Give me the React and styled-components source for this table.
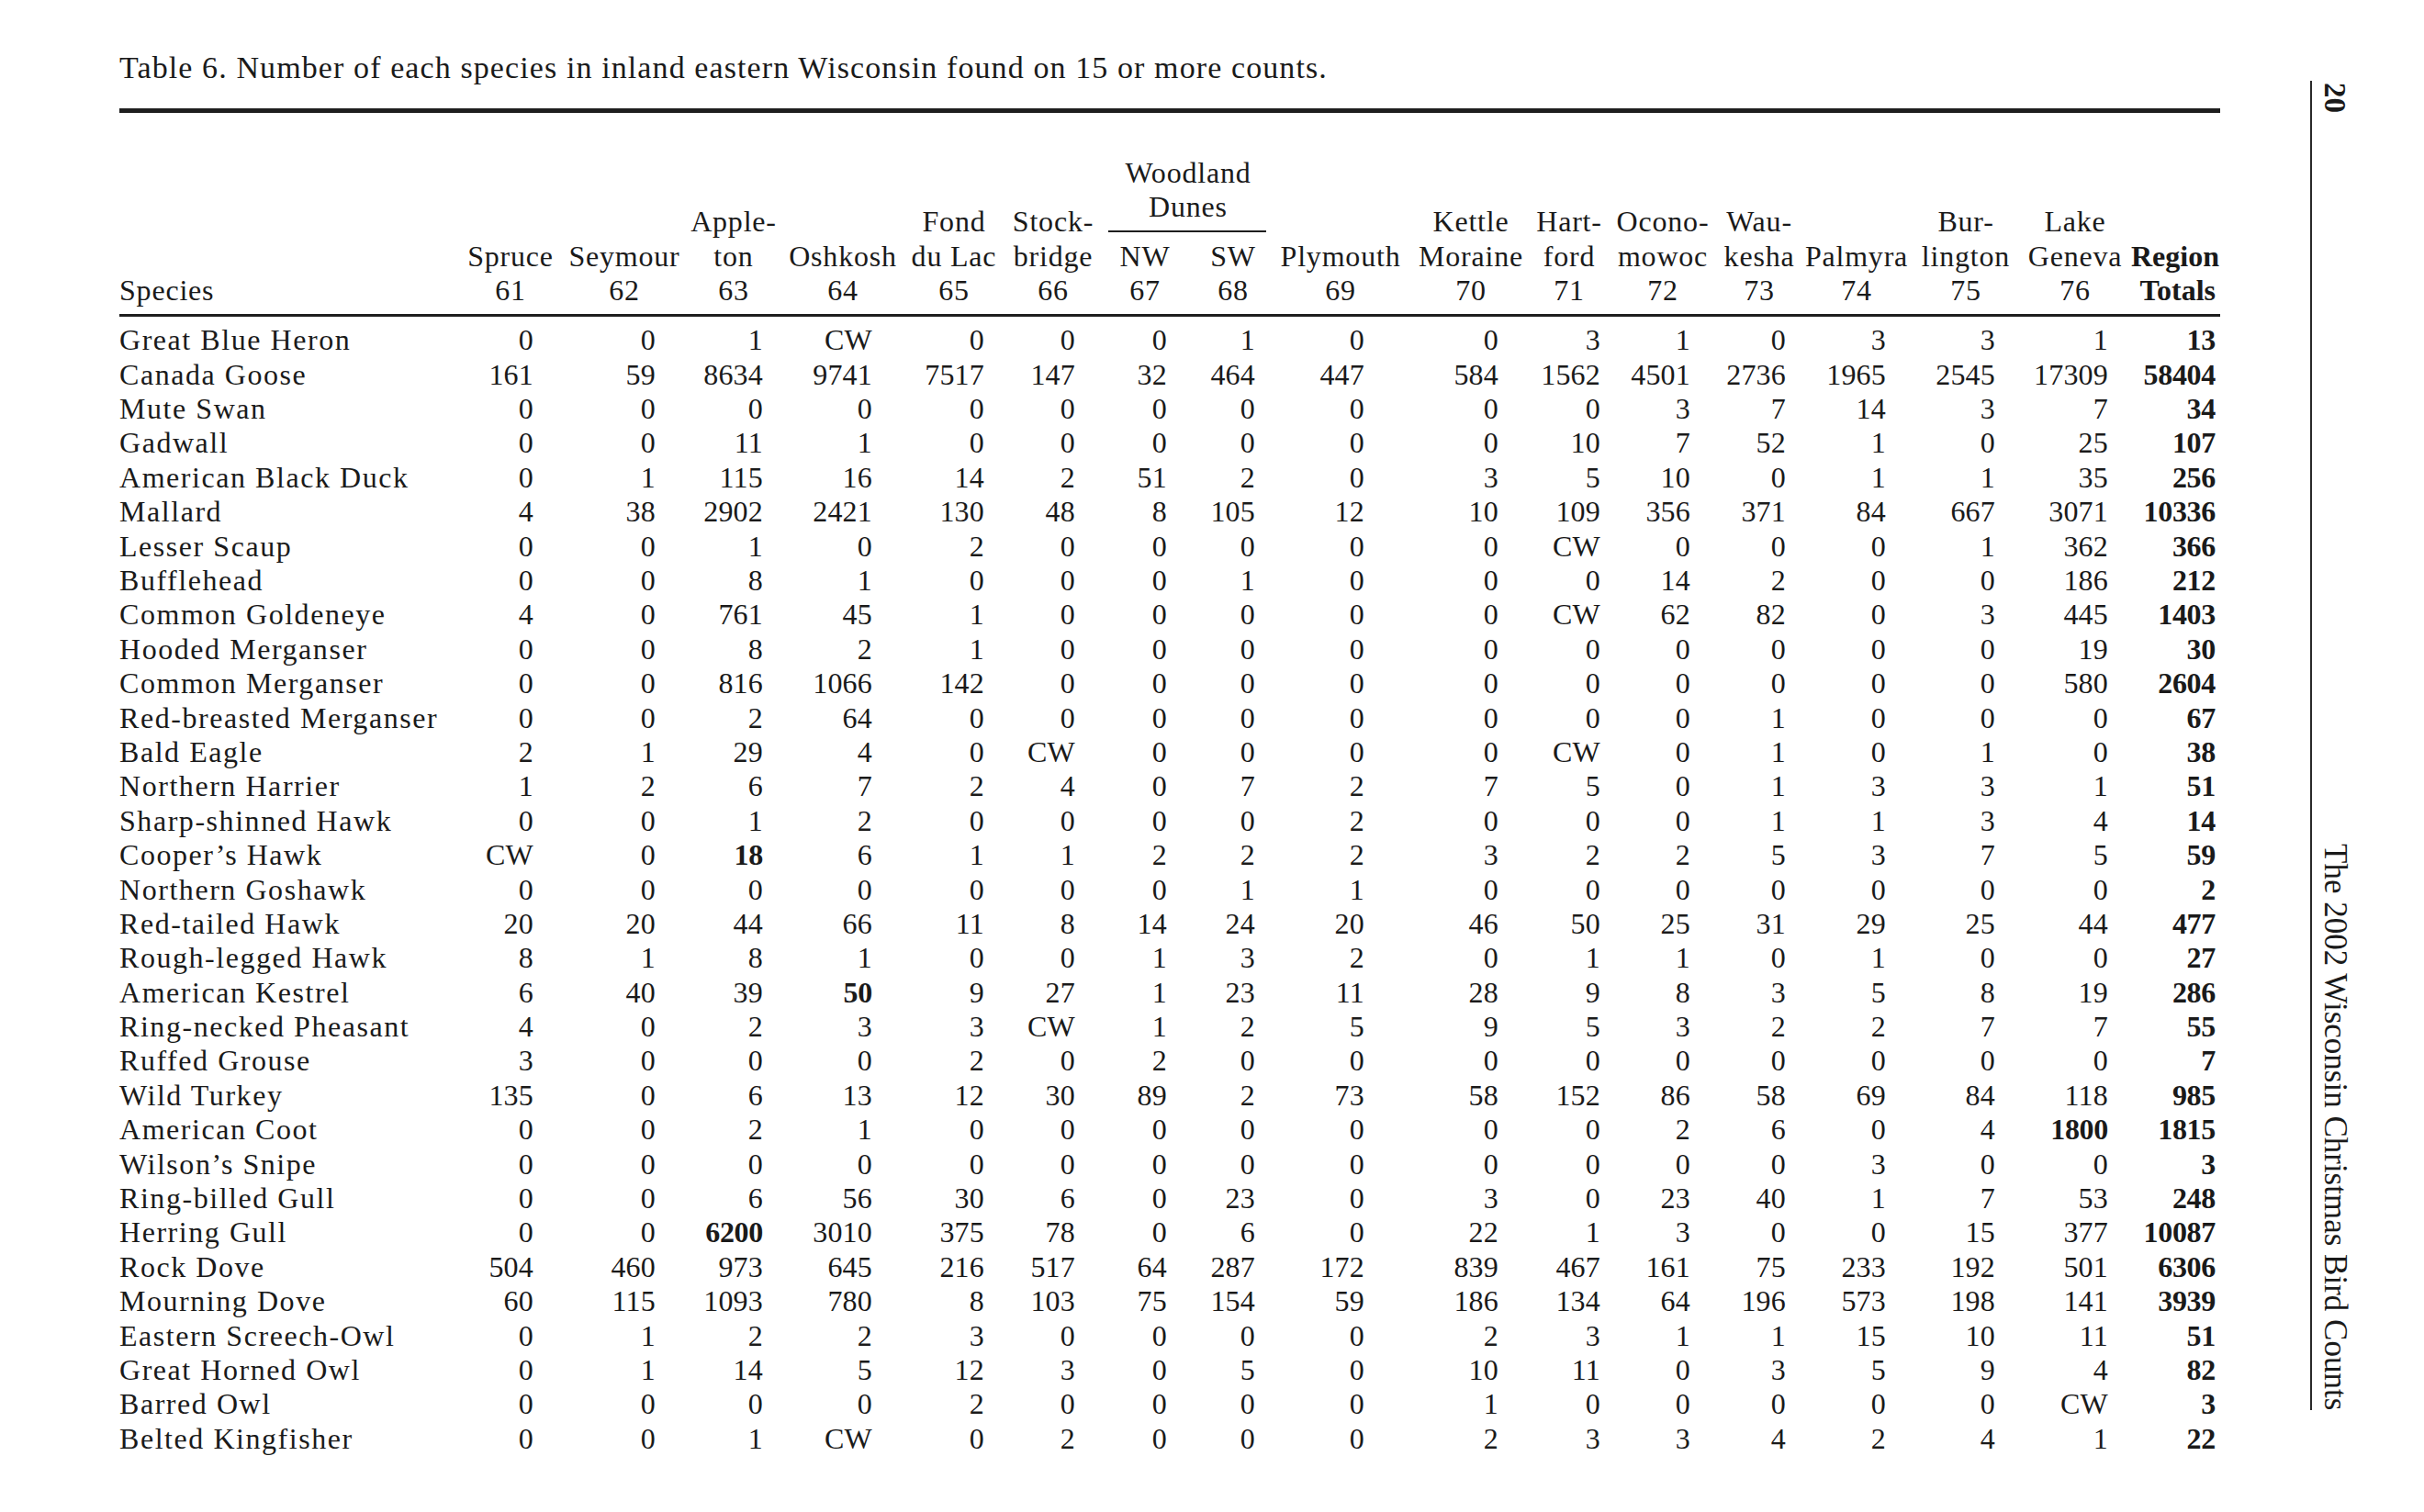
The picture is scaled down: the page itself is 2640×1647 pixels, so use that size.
import React from 'react';
import styled, { createGlobalStyle } from 'styled-components';

const GlobalStyle = createGlobalStyle`
  html, body { margin: 0; padding: 0; background: #ffffff; }
  body {
    font-family: "Liberation Serif", "Times New Roman", serif;
    color: #1a1a1a;
  }
`;

const COLS = [
  { w: 120, pad: 35 },
  { w: 128, pad: 30 },
  { w: 110, pad: 23 },
  { w: 128, pad: 32 },
  { w: 114, pad: 24 },
  { w: 102, pad: 27 },
  { w: 98, pad: 25 },
  { w: 94, pad: 23 },
  { w: 140, pad: 44 },
  { w: 144, pad: 42 },
  { w: 70, pad: 1 },
  { w: 134, pad: 37 },
  { w: 76, pad: 9 },
  { w: 136, pad: 36 },
  { w: 102, pad: 19 },
  { w: 136, pad: 32 },
  { w: 90, pad: 5 },
];

const TEMPLATE = `366px ${COLS.map((c) => `${c.w}px`).join(' ')}`;
const LINE = 37.4;

const HEAD_TOP = ['', '', 'Apple-', '', 'Fond', 'Stock-', null, null, '', 'Kettle', 'Hart-', 'Ocono-', 'Wau-', '', 'Bur-', 'Lake', ''];
const HEAD_MID = ['Spruce', 'Seymour', 'ton', 'Oshkosh', 'du Lac', 'bridge', 'NW', 'SW', 'Plymouth', 'Moraine', 'ford', 'mowoc', 'kesha', 'Palmyra', 'lington', 'Geneva', 'Region'];
const HEAD_NUM = ['61', '62', '63', '64', '65', '66', '67', '68', '69', '70', '71', '72', '73', '74', '75', '76', 'Totals'];

// "*" prefix marks a bold figure
const ROWS = [
  ['Great Blue Heron', '0 0 1 CW 0 0 0 1 0 0 3 1 0 3 3 1 13'],
  ['Canada Goose', '161 59 8634 9741 7517 147 32 464 447 584 1562 4501 2736 1965 2545 17309 58404'],
  ['Mute Swan', '0 0 0 0 0 0 0 0 0 0 0 3 7 14 3 7 34'],
  ['Gadwall', '0 0 11 1 0 0 0 0 0 0 10 7 52 1 0 25 107'],
  ['American Black Duck', '0 1 115 16 14 2 51 2 0 3 5 10 0 1 1 35 256'],
  ['Mallard', '4 38 2902 2421 130 48 8 105 12 10 109 356 371 84 667 3071 10336'],
  ['Lesser Scaup', '0 0 1 0 2 0 0 0 0 0 CW 0 0 0 1 362 366'],
  ['Bufflehead', '0 0 8 1 0 0 0 1 0 0 0 14 2 0 0 186 212'],
  ['Common Goldeneye', '4 0 761 45 1 0 0 0 0 0 CW 62 82 0 3 445 1403'],
  ['Hooded Merganser', '0 0 8 2 1 0 0 0 0 0 0 0 0 0 0 19 30'],
  ['Common Merganser', '0 0 816 1066 142 0 0 0 0 0 0 0 0 0 0 580 2604'],
  ['Red-breasted Merganser', '0 0 2 64 0 0 0 0 0 0 0 0 1 0 0 0 67'],
  ['Bald Eagle', '2 1 29 4 0 CW 0 0 0 0 CW 0 1 0 1 0 38'],
  ['Northern Harrier', '1 2 6 7 2 4 0 7 2 7 5 0 1 3 3 1 51'],
  ['Sharp-shinned Hawk', '0 0 1 2 0 0 0 0 2 0 0 0 1 1 3 4 14'],
  ['Cooper\u2019s Hawk', 'CW 0 *18 6 1 1 2 2 2 3 2 2 5 3 7 5 59'],
  ['Northern Goshawk', '0 0 0 0 0 0 0 1 1 0 0 0 0 0 0 0 2'],
  ['Red-tailed Hawk', '20 20 44 66 11 8 14 24 20 46 50 25 31 29 25 44 477'],
  ['Rough-legged Hawk', '8 1 8 1 0 0 1 3 2 0 1 1 0 1 0 0 27'],
  ['American Kestrel', '6 40 39 *50 9 27 1 23 11 28 9 8 3 5 8 19 286'],
  ['Ring-necked Pheasant', '4 0 2 3 3 CW 1 2 5 9 5 3 2 2 7 7 55'],
  ['Ruffed Grouse', '3 0 0 0 2 0 2 0 0 0 0 0 0 0 0 0 7'],
  ['Wild Turkey', '135 0 6 13 12 30 89 2 73 58 152 86 58 69 84 118 985'],
  ['American Coot', '0 0 2 1 0 0 0 0 0 0 0 2 6 0 4 *1800 1815'],
  ['Wilson\u2019s Snipe', '0 0 0 0 0 0 0 0 0 0 0 0 0 3 0 0 3'],
  ['Ring-billed Gull', '0 0 6 56 30 6 0 23 0 3 0 23 40 1 7 53 248'],
  ['Herring Gull', '0 0 *6200 3010 375 78 0 6 0 22 1 3 0 0 15 377 10087'],
  ['Rock Dove', '504 460 973 645 216 517 64 287 172 839 467 161 75 233 192 501 6306'],
  ['Mourning Dove', '60 115 1093 780 8 103 75 154 59 186 134 64 196 573 198 141 3939'],
  ['Eastern Screech-Owl', '0 1 2 2 3 0 0 0 0 2 3 1 1 15 10 11 51'],
  ['Great Horned Owl', '0 1 14 5 12 3 0 5 0 10 11 0 3 5 9 4 82'],
  ['Barred Owl', '0 0 0 0 2 0 0 0 0 1 0 0 0 0 0 CW 3'],
  ['Belted Kingfisher', '0 0 1 CW 0 2 0 0 0 2 3 3 4 2 4 1 22'],
];

const Page = styled.div`
  width: 2640px;
  height: 1647px;
  box-sizing: border-box;
  padding: 55px 0 0 130px;
  display: flex;
  align-items: flex-start;
  overflow: hidden;
`;

const Main = styled.main`
  flex: none;
  width: 2288px;
`;

const Title = styled.h1`
  margin: 0;
  font-weight: normal;
  font-size: 34px;
  line-height: 38px;
  letter-spacing: 1.1px;
  white-space: nowrap;
`;

const Rule = styled.div`
  height: ${(p) => p.$thick}px;
  background: #1e1e1e;
  margin-top: ${(p) => p.$gap}px;
`;

const Head = styled.div`
  display: grid;
  grid-template-columns: ${TEMPLATE};
  grid-template-rows: auto ${LINE}px ${LINE}px;
  align-items: end;
  margin-top: 47px;
  font-size: 32px;
  line-height: ${LINE}px;
`;

const HeadCell = styled.div`
  display: flex;
  justify-content: ${(p) => (p.$align === 'right' ? 'flex-end' : p.$align === 'left' ? 'flex-start' : 'center')};
  padding-right: ${(p) => p.$pad || 0}px;
  white-space: nowrap;
  font-weight: ${(p) => (p.$bold ? 700 : 400)};
  letter-spacing: ${(p) => (p.$bold ? 0 : 0.8)}px;
  height: ${LINE}px;
`;

const Group = styled.div`
  grid-column: span 2;
  display: flex;
  flex-direction: column;
  align-items: center;
  padding-bottom: 8px;
  letter-spacing: 0.8px;
`;

const GroupRule = styled.div`
  align-self: stretch;
  margin: 6px 11px 0 9px;
  height: 2px;
  background: #1e1e1e;
`;

const Body = styled.div`
  padding-top: 7.7px;
  font-size: 32px;
  line-height: ${LINE}px;
`;

const Row = styled.div`
  display: grid;
  grid-template-columns: ${TEMPLATE};
  height: ${LINE}px;
`;

const Species = styled.div`
  white-space: nowrap;
  letter-spacing: 1.55px;
`;

const Num = styled.div`
  text-align: right;
  white-space: nowrap;
  padding-right: ${(p) => p.$pad}px;
  font-weight: ${(p) => (p.$bold ? 700 : 400)};
  letter-spacing: ${(p) => (p.$bold ? -0.3 : 0.2)}px;
`;

const Aside = styled.aside`
  flex: none;
  box-sizing: border-box;
  width: 47px;
  height: 1448px;
  margin: 33px 0 0 98px;
  padding-left: 5px;
  border-left: 2px solid #2a2a2a;
  writing-mode: vertical-rl;
  display: flex;
  justify-content: space-between;
  line-height: 40px;
`;

const Folio = styled.span`
  margin-top: 2px;
  font-size: 33px;
  font-weight: 700;
  font-family: "Liberation Serif", "Times New Roman", serif;
`;

const RunningHead = styled.span`
  font-size: 35px;
  font-family: "Liberation Serif", "Times New Roman", serif;
`;

function Figure({ value, pad, isTotal }) {
  const bold = isTotal || value.startsWith('*');
  return (
    <Num $pad={pad} $bold={bold}>
      {value.replace('*', '')}
    </Num>
  );
}

export default function App() {
  return (
    <>
      <GlobalStyle />
      <Page>
        <Main>
          <Title>Table 6. Number of each species in inland eastern Wisconsin found on 15 or more counts.</Title>
          <Rule $thick={5} $gap={25} />
          <Head>
            <HeadCell />
            {HEAD_TOP.map((t, i) => {
              if (t === null) {
                return i === 6 ? (
                  <Group key="group">
                    <span>Woodland</span>
                    <span>Dunes</span>
                    <GroupRule />
                  </Group>
                ) : null;
              }
              return <HeadCell key={`t${i}`}>{t}</HeadCell>;
            })}
            <HeadCell />
            {HEAD_MID.map((t, i) => {
              const last = i === HEAD_MID.length - 1;
              return (
                <HeadCell key={`m${i}`} $align={last ? 'right' : 'center'} $bold={last} $pad={last ? 1 : 0}>
                  {t}
                </HeadCell>
              );
            })}
            <HeadCell $align="left">Species</HeadCell>
            {HEAD_NUM.map((t, i) => {
              const last = i === HEAD_NUM.length - 1;
              return (
                <HeadCell key={`n${i}`} $align={last ? 'right' : 'center'} $bold={last} $pad={last ? 5 : 0}>
                  {t}
                </HeadCell>
              );
            })}
          </Head>
          <Rule $thick={3} $gap={6} />
          <Body>
            {ROWS.map(([name, values]) => {
              const vals = values.split(' ');
              return (
                <Row key={name}>
                  <Species>{name}</Species>
                  {vals.map((v, i) => (
                    <Figure key={i} value={v} pad={COLS[i].pad} isTotal={i === vals.length - 1} />
                  ))}
                </Row>
              );
            })}
          </Body>
        </Main>
        <Aside>
          <Folio>20</Folio>
          <RunningHead>The 2002 Wisconsin Christmas Bird Counts</RunningHead>
        </Aside>
      </Page>
    </>
  );
}
